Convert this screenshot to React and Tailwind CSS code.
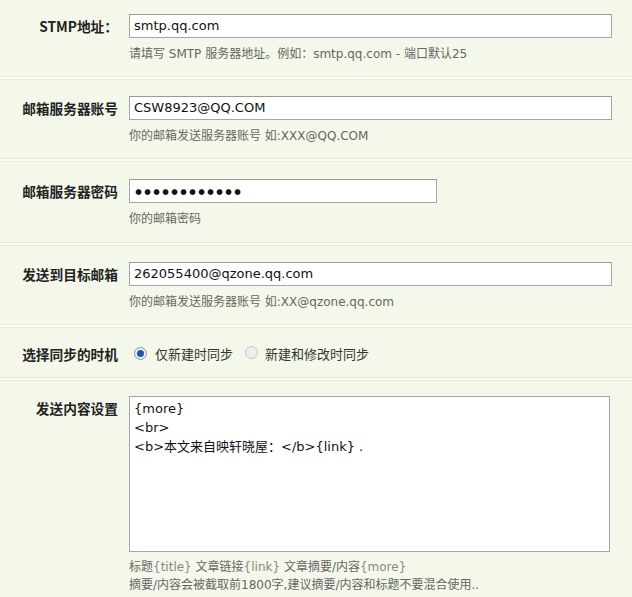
import React from "react";

const cjk = { fontFamily: '"DejaVu Sans", "Noto Sans CJK SC", sans-serif' };
const labelFont = { fontFamily: '"Noto Sans CJK SC", sans-serif' };

function Sep() {
  return (
    <div className="flex flex-col">
      <div className="h-px bg-[#e6ead9]" />
      <div className="h-[2px] bg-[#f9fbf4]" />
      <div className="h-px bg-[#eaeee0]" />
    </div>
  );
}

function Label({ children }) {
  return (
    <div
      className="w-[118px] shrink-0 text-right text-[13.7px] font-bold leading-[24px] text-[#222] whitespace-nowrap"
      style={labelFont}
    >
      {children}
    </div>
  );
}

function Help({ children }) {
  return (
    <div className="mt-[8px] text-[12px] leading-[16px] text-[#666]" style={cjk}>
      {children}
    </div>
  );
}

function Input({ value, w = "w-[483px]", password }) {
  return (
    <div
      className={`${w} h-[24px] border border-[#a6a6a6] border-t-[#9a9a9a] bg-white pl-[4px] text-[13px] leading-[22px] text-[#111] whitespace-nowrap overflow-hidden`}
      style={{ fontFamily: '"DejaVu Sans", sans-serif' }}
    >
      {password ? (
        <span>
          {"●●●●●●●●●●●●".split("").map((c, i) => (
            <span key={i} className="inline-block w-[9px] text-center text-[7.5px] align-middle">●</span>
          ))}
        </span>
      ) : (
        value
      )}
    </div>
  );
}

function Row({ label, children, className = "" }) {
  return (
    <div className={`flex ${className}`}>
      <Label>{label}</Label>
      <div className="ml-[11px] flex flex-col">{children}</div>
    </div>
  );
}

function Radio({ checked }) {
  return (
    <span
      className={`inline-flex h-[13px] w-[13px] items-center justify-center rounded-full border ${
        checked ? "border-[#8a97a8] bg-[#e9eef5]" : "border-[#c4c7cc] bg-[#eceef0]"
      }`}
    >
      {checked && <span className="h-[7px] w-[7px] rounded-full bg-[#1f56a3]" />}
    </span>
  );
}

export default function App() {
  return (
    <div className="w-[632px] h-[597px] overflow-hidden bg-[#f4f8ea]">
      <Row label="STMP地址：" className="pt-[14px] pb-[14px]">
        <Input value="smtp.qq.com" />
        <Help>
          请填写 SMTP 服务器地址。例如：smtp.qq.com - 端口默认25
        </Help>
      </Row>
      <Sep />
      <Row label="邮箱服务器账号" className="pt-[16px] pb-[14px]">
        <Input value="CSW8923@QQ.COM" />
        <Help>你的邮箱发送服务器账号 如:XXX@QQ.COM</Help>
      </Row>
      <Sep />
      <Row label="邮箱服务器密码" className="pt-[17px] pb-[15px]">
        <Input password w="w-[308px]" />
        <Help>你的邮箱密码</Help>
      </Row>
      <Sep />
      <Row label="发送到目标邮箱" className="pt-[16px] pb-[14px]">
        <Input value="262055400@qzone.qq.com" />
        <Help>你的邮箱发送服务器账号 如:XX@qzone.qq.com</Help>
      </Row>
      <Sep />
      <div className="flex items-center h-[49px] pt-[2px]">
        <Label>选择同步的时机</Label>
        <div
          className="ml-[16px] flex items-center text-[13px] text-[#333]"
          style={labelFont}
        >
          <Radio checked />
          <span className="ml-[8px]">仅新建时同步</span>
          <span className="ml-[12px]"><Radio /></span>
          <span className="ml-[7px]">新建和修改时同步</span>
        </div>
      </div>
      <Sep />
      <Row label="发送内容设置" className="pt-[15px]">
        <div
          className="w-[481px] h-[156px] border border-[#a6a6a6] bg-white px-[4px] pt-[2px] text-[13px] leading-[19px] text-[#111]"
          style={cjk}
        >
          <div>{"{more}"}</div>
          <div>{"<br>"}</div>
          <div>{"<b>本文来自映轩晓屋：</b>{link} ."}</div>
        </div>
        <div className="mt-[6px] text-[12px] leading-[18px] text-[#666]" style={cjk}>
          <div>
            标题<span className="text-[#888]">{"{title}"}</span> 文章链接
            <span className="text-[#888]">{"{link}"}</span> 文章摘要/内容
            <span className="text-[#888]">{"{more}"}</span>
          </div>
          <div>摘要/内容会被截取前1800字,建议摘要/内容和标题不要混合使用..</div>
        </div>
      </Row>
    </div>
  );
}
